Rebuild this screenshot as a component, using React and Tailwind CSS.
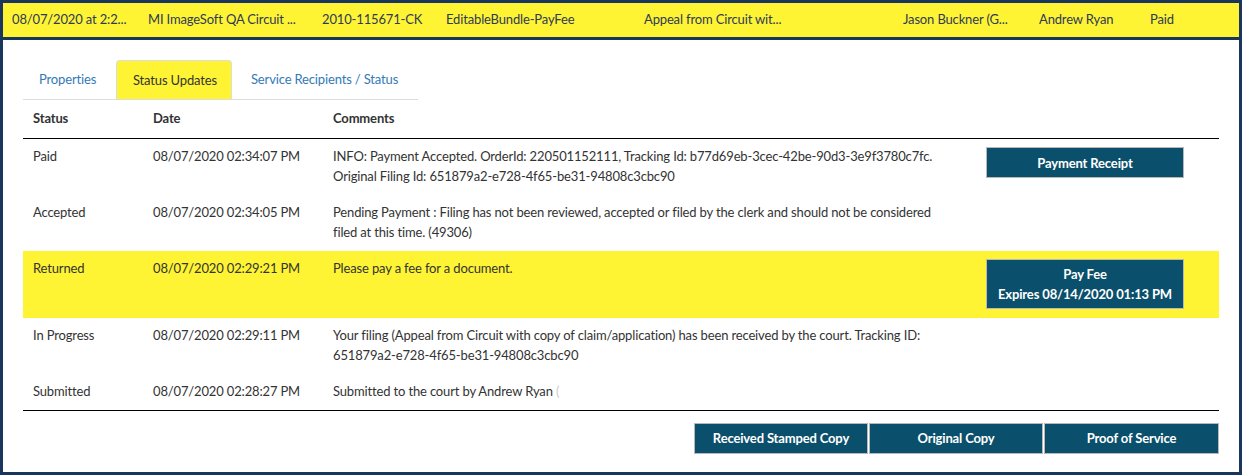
import React from "react";

const font = { fontFamily: "Lato, 'Open Sans', sans-serif" };

const rows = [
  {
    status: "Paid",
    date: "08/07/2020 02:34:07 PM",
    comment: (
      <>
        INFO: Payment Accepted. OrderId: 220501152111, Tracking Id: b77d69eb-3cec-42be-90d3-3e9f3780c7fc.
        <br />
        Original Filing Id: 651879a2-e728-4f65-be31-94808c3cbc90
      </>
    ),
    button: "receipt",
  },
  {
    status: "Accepted",
    date: "08/07/2020 02:34:05 PM",
    comment: (
      <>
        Pending Payment : Filing has not been reviewed, accepted or filed by the clerk and should not be considered
        <br />
        filed at this time. (49306)
      </>
    ),
  },
  {
    status: "Returned",
    date: "08/07/2020 02:29:21 PM",
    comment: <>Please pay a fee for a document.</>,
    button: "fee",
    highlight: true,
  },
  {
    status: "In Progress",
    date: "08/07/2020 02:29:11 PM",
    comment: (
      <>
        Your filing (Appeal from Circuit with copy of claim/application) has been received by the court. Tracking ID:
        <br />
        651879a2-e728-4f65-be31-94808c3cbc90
      </>
    ),
  },
  {
    status: "Submitted",
    date: "08/07/2020 02:28:27 PM",
    comment: (
      <>
        Submitted to the court by Andrew Ryan <span className="text-[#ccc]">(</span>
      </>
    ),
  },
];

export default function App() {
  return (
    <div
      className="w-[1242px] h-[475px] border-[3px] border-[#1b365d] bg-white flex flex-col text-[13px] text-[#333] tracking-[-0.15px]"
      style={font}
    >
      <div className="h-[37px] bg-[#fef433] border-b-[3px] border-[#1b365d] flex items-center text-[#2f3a55] shrink-0">
        <span className="ml-[9px] w-[136px] shrink-0 whitespace-nowrap">08/07/2020 at 2:2...</span>
        <span className="w-[174px] shrink-0 whitespace-nowrap">MI ImageSoft QA Circuit ...</span>
        <span className="w-[124px] shrink-0 whitespace-nowrap">2010-115671-CK</span>
        <span className="w-[198px] shrink-0 whitespace-nowrap">EditableBundle-PayFee</span>
        <span className="w-[259px] shrink-0 whitespace-nowrap">Appeal from Circuit wit...</span>
        <span className="w-[136px] shrink-0 whitespace-nowrap">Jason Buckner (G...</span>
        <span className="w-[111px] shrink-0 whitespace-nowrap">Andrew Ryan</span>
        <span className="shrink-0 whitespace-nowrap">Paid</span>
      </div>

      <div className="px-[20px] pt-[20px] flex flex-col">
        <div className="flex w-[395px] h-[40px] border-b border-[#ddd]">
          <div className="w-[93px] flex items-center pl-[16px] pt-[1px] text-[#337ab7]">Properties</div>
          <div className="w-[116px] flex items-center pl-[16px] pt-[1px] bg-[#fef433] border border-b-0 border-[#ddd] rounded-t-[4px] text-[#333]">
            Status Updates
          </div>
          <div className="flex items-center pl-[19px] pt-[1px] text-[#337ab7]">Service Recipients / Status</div>
        </div>

        <div className="flex h-[39px] items-center font-bold border-b border-black">
          <div className="w-[120px] pl-[10px]">Status</div>
          <div className="w-[180px] pl-[10px]">Date</div>
          <div className="pl-[10px]">Comments</div>
        </div>

        {rows.map((r) => (
          <div
            key={r.status}
            className={`flex pt-[7px] pb-[9px] leading-[20px] ${r.highlight ? "bg-[#fef433]" : ""}`}
          >
            <div className="w-[120px] pl-[10px] shrink-0">{r.status}</div>
            <div className="w-[180px] pl-[10px] shrink-0">{r.date}</div>
            <div className="flex-1 pl-[10px]">{r.comment}</div>
            <div className="w-[243px] shrink-0 flex justify-start pl-[10px]">
              {r.button === "receipt" && (
                <button className="w-[198px] h-[31px] mt-[1px] bg-[#0a4f6b] border border-[#b8b8b8] text-white font-bold text-[13px]">
                  Payment Receipt
                </button>
              )}
              {r.button === "fee" && (
                <button className="w-[198px] h-[50px] mt-[1px] bg-[#0a4f6b] border border-[#b8b8b8] text-white font-bold text-[13px] leading-[20px] flex flex-col items-center justify-center">
                  <span>Pay Fee</span>
                  <span>Expires 08/14/2020 01:13 PM</span>
                </button>
              )}
            </div>
          </div>
        ))}

        <div className="border-t border-black flex justify-end pt-[12px] gap-[1px]">
          <button className="w-[174px] h-[31px] bg-[#0a4f6b] border border-[#b8b8b8] text-white font-bold text-[13px]">
            Received Stamped Copy
          </button>
          <button className="w-[174px] h-[31px] bg-[#0a4f6b] border border-[#b8b8b8] text-white font-bold text-[13px]">
            Original Copy
          </button>
          <button className="w-[175px] h-[31px] bg-[#0a4f6b] border border-[#b8b8b8] text-white font-bold text-[13px]">
            Proof of Service
          </button>
        </div>
      </div>
    </div>
  );
}
